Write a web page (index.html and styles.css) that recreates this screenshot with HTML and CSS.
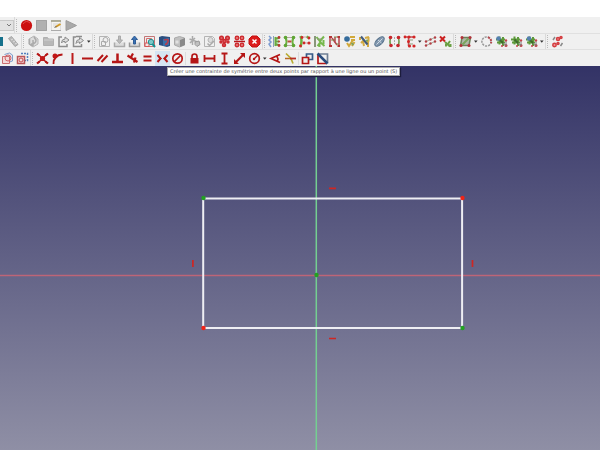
FILE: index.html
```html
<!DOCTYPE html>
<html lang="fr">
<head>
<meta charset="utf-8">
<title>Sketcher</title>
<link rel="stylesheet" href="styles.css">
</head>
<body>
<svg class="defs" aria-hidden="true">
  <symbol id="caret" viewBox="0 0 6 15"><path d="M1 6.500h3.600l-1.800 2.300z" fill="#333"/></symbol>
  <symbol id="flower" viewBox="0 0 15 15">
    <g fill="none" stroke="#5d9a3a" stroke-width="2"><path d="M5.500 2.500v8M9 3v9M2 5.500h9M3 8.500h8"/></g>
    <path d="M5.500 5.500L9 9" stroke="#3d6a2a" stroke-width="2"/>
    <g fill="#c4434a"><circle cx="12" cy="6.500" r="1.200"/><circle cx="12" cy="11.500" r="1.500"/><circle cx="8" cy="12" r="1"/></g>
    <path d="M9 9l3 2.500 0-4" fill="none" stroke="#7a7a7a"/>
  </symbol>
  <symbol id="sheet" viewBox="0 0 15 15"><path d="M2.500 2.500h8l2 2v8h-10z" fill="#f0f0f0" stroke="#b4b4b4"/></symbol>
</svg>

<header class="toolbars">
  <div class="toolbar" role="toolbar" aria-label="Macro">
    <div class="group">
      <div class="combo">
        <select aria-label="Atelier"><option></option></select>
        <svg class="chevron" viewBox="0 0 8 8"><path d="M2 3l2 2 2-2" fill="none" stroke="#777"/></svg>
      </div>
    </div>
    <div class="group last">
      <button aria-label="Enregistrer"><svg viewBox="0 0 15 15"><circle cx="7.500" cy="7.500" r="5.600" fill="#cc1010"/><path d="M4 6q3-4.500 7-1" stroke="#e04848" fill="none"/></svg></button>
      <button aria-label="Arrêter"><svg viewBox="0 0 15 15"><path d="M2 2h11v11H2z" fill="#b0b0b0"/><path d="M2.500 2.500h10v10h-10z" fill="none" stroke="#a2a2a2"/></svg></button>
      <button aria-label="Macros"><svg viewBox="0 0 15 15"><path d="M2.500 2.500h9v10h-9z" fill="#f4f4ef" stroke="#ddd"/><path d="M2 3h10" stroke="#9a9a80" stroke-width="1.500"/><path d="M4 6h6M4 8h3" stroke="#d4d4d4"/><path d="M6.500 9l5-3" stroke="#d39a22" stroke-width="2"/><path d="M5.500 9.500l2-1" stroke="#666"/><path d="M2 12.500h10" stroke="#aaa"/></svg></button>
      <button aria-label="Exécuter"><svg viewBox="0 0 15 15"><path d="M2 2.500l10.500 5L2 12.500z" fill="#a9a9a9" stroke="#9c9c9c"/></svg></button>
    </div>
  </div>

  <div class="toolbar middle" role="toolbar" aria-label="Esquisse">
    <div class="group">
      <button class="cut" aria-label="Partie"><svg viewBox="0 0 15 15"><path d="M2 3h8v9H2z" fill="#16718c"/><path d="M4 5h3v3H4z" fill="#4fc0d2"/></svg></button>
      <button aria-label="Mesurer"><svg viewBox="0 0 15 15"><path d="M2.500 4.500l3-2 6.500 8-3 2z" fill="#b9b9b9" stroke="#a4a4a4"/><path d="M5 6l2-1M7 8l2-1M9 10l2-1" stroke="#ddd"/></svg></button>
    </div>
    <div class="group">
      <button aria-label="Corps"><svg viewBox="0 0 15 15"><path d="M3 5l5-3 4 3v5l-5 3-4-3z" fill="#ddd" stroke="#b4b4b4"/><path d="M3.500 5v5l3 2M7 6v6M5 10q5 0 5-4L8 3" stroke="#aaa" fill="none" stroke-width="1.500"/></svg></button>
      <button aria-label="Groupe"><svg viewBox="0 0 15 15"><path d="M2.500 3.500h4l1 1.500h5v6.500h-10z" fill="#b8b8b8" stroke="#b0b0b0"/><path d="M3 6h9" stroke="#d0d0d0"/></svg></button>
      <button aria-label="Lien"><svg viewBox="0 0 15 15"><path d="M6 3H3v9.500h8V10" fill="none" stroke="#8c8c8c" stroke-width="1.500"/><path d="M5.500 9q0-4 3.500-4V3l4 3-4 3V7.500Q6.500 7 5.500 9z" fill="#ddd" stroke="#8c8c8c"/></svg></button>
      <button aria-label="Actions de lien"><svg viewBox="0 0 15 15"><path d="M5 3H2.500v9.500h8V10M5 2.500h6" fill="none" stroke="#8c8c8c" stroke-width="1.500"/><path d="M5 9.500q0-4 3.500-4v-2l4 3-4 3V8Q6 7.500 5 9.500z" fill="#ddd" stroke="#8c8c8c"/></svg></button>
      <button class="drop" aria-label="Plus de liens"><svg><use href="#caret"/></svg></button>
    </div>
    <div class="group">
      <button aria-label="Nouvelle esquisse"><svg viewBox="0 0 15 15"><use href="#sheet"/><circle cx="8.500" cy="6" r="2.500" fill="none" stroke="#aaa"/><path d="M4.500 7.500h4v4h-4z" fill="none" stroke="#aaa"/></svg></button>
      <button aria-label="Modifier l'esquisse"><svg viewBox="0 0 15 15"><path d="M2.500 8.500v4h10v-4" fill="#ddd" stroke="#aaa" stroke-width="1.500"/><path d="M6.500 2h2v4h2l-3 3.500-3-3.500h2z" fill="#bbb" stroke="#aaa"/></svg></button>
      <button aria-label="Quitter l'esquisse"><svg viewBox="0 0 15 15"><path d="M2.500 8.500v4h10v-4" fill="#ddd" stroke="#999" stroke-width="1.500"/><path d="M7.500 2l3 3.500h-2V10h-2V5.500h-2z" fill="#3972b4" stroke="#2f5c96"/></svg></button>
      <button aria-label="Vue de l'esquisse"><svg viewBox="0 0 15 15"><path d="M2.500 2.500h10v10h-10z" fill="#eee" stroke="#c27676"/><path d="M4.500 4.500h5v5h-5z" fill="none" stroke="#d76c6c"/><path d="M3 9h4v3.500H3z" fill="#f4e4e4" stroke="#d45a5a"/><circle cx="9" cy="8" r="2.700" fill="#7cc8c8" stroke="#219191"/><path d="M10.500 10l2.500 3" stroke="#159090" stroke-width="2"/></svg></button>
      <button aria-label="Vue de section"><svg viewBox="0 0 15 15"><path d="M2 3l3-1 8 1v9l-3 1-8-2z" fill="#2c4f80"/><path d="M6 5l6-1v7l-6 1z" fill="#3971aa"/><path d="M7 6q5-1.500 4 1.500t-3 3" fill="none" stroke="#b63e4c" stroke-width="1.700"/></svg></button>
      <button aria-label="Projeter sur face"><svg viewBox="0 0 15 15"><path d="M2.500 4l5-1.500 5 1.500v7l-5 2-5-2z" fill="#c0c0c0" stroke="#aaa"/><path d="M8 6v7l5-2V4z" fill="#8a8a8a"/><path d="M3.500 6.500h3v3h-3z" fill="#e0e0e0"/></svg></button>
      <button aria-label="Réorienter"><svg viewBox="0 0 15 15"><path d="M5.500 2v9M2.500 5l8 3M3 9l5-5" stroke="#aaa" stroke-width="1.500"/><path d="M8 8l4-1 1 3.500-3 2-2-2z" fill="#c0c0c0" stroke="#999"/></svg></button>
      <button aria-label="Valider"><svg viewBox="0 0 15 15"><use href="#sheet"/><circle cx="8.500" cy="6" r="2.500" fill="#ddd" stroke="#b4b4b4"/><path d="M5.500 9.500l2 2 4.500-4.500" fill="none" stroke="#aaa" stroke-width="1.500"/></svg></button>
      <button aria-label="Fusionner"><svg viewBox="0 0 15 15"><g fill="#df6468" stroke="#cc2a30" stroke-width="1.500"><circle cx="4.500" cy="4" r="1.800"/><circle cx="10.500" cy="4" r="1.800"/><circle cx="7.500" cy="7" r="1.600"/><circle cx="11" cy="8" r="1"/><circle cx="4" cy="8" r="1"/><circle cx="7" cy="11" r="1.500"/></g></svg></button>
      <button aria-label="Miroir"><svg viewBox="0 0 15 15"><g fill="#e88" stroke="#ce2c30" stroke-width="1.500"><circle cx="5" cy="4" r="1.700"/><circle cx="10" cy="4" r="1.700"/><circle cx="5" cy="11" r="1.700"/><circle cx="10" cy="11" r="1.700"/></g><path d="M2 7.500h11" stroke="#b7161c" stroke-width="1.500"/></svg></button>
      <button aria-label="Arrêter l'opération"><svg viewBox="0 0 15 15"><path d="M5 2h5l3 3v5l-3 3H5l-3-3V5z" fill="#dc1c1c" stroke="#c41313"/><path d="M5.500 5.500l4 4m0-4l-4 4" stroke="#fff" stroke-width="1.500"/></svg></button>
    </div>
    <div class="group">
      <button aria-label="Degrés de liberté"><svg viewBox="0 0 15 15"><path d="M2 2l2 2-2 2 2 2-2 2 2 3" fill="none" stroke="#7c9bd0" stroke-width="1.500"/><path d="M6.500 2v11" stroke="#8aa0b8"/><path d="M8 3.500q2 2 4 0M8 7.500h4M8 11.500q2-2 4 0M8.500 3v9" fill="none" stroke="#68ab40" stroke-width="2"/><g fill="#b83a32"><circle cx="12" cy="3.500" r="1.400"/><circle cx="12" cy="7.500" r="1"/><circle cx="12" cy="11.500" r="1.400"/></g></svg></button>
      <button aria-label="Contraintes associées"><svg viewBox="0 0 15 15"><path d="M3.500 3q2 4.500 0 9M11.500 3q-2 4.500 0 9" fill="none" stroke="#6bb340" stroke-width="2"/><path d="M5 3.500h5M5 11.500h5" stroke="#b8a8a0"/><path d="M5.500 7.500h4" stroke="#b8503c" stroke-width="2"/><g fill="#5fa535"><circle cx="3.500" cy="3.500" r="1.800"/><circle cx="11.500" cy="3.500" r="1.800"/><circle cx="3.500" cy="11.500" r="1.800"/><circle cx="11.500" cy="11.500" r="1.800"/></g></svg></button>
      <button aria-label="Éléments associés"><svg viewBox="0 0 15 15"><path d="M3.500 2q2 5 0 11M9.500 2.500l3 2" fill="none" stroke="#6bb340" stroke-width="2.500"/><path d="M5 3h5M7 9h5" stroke="#c9a4a4"/><g fill="#d02828"><circle cx="5" cy="3.500" r="1.400"/><circle cx="12" cy="4" r="1.400"/><circle cx="7" cy="9" r="1.400"/><circle cx="12" cy="9" r="1.600"/><circle cx="3.500" cy="12" r="1.400"/></g></svg></button>
      <button aria-label="Contraintes redondantes"><svg viewBox="0 0 15 15"><path d="M3 2v11" stroke="#667a55" stroke-width="1.500"/><path d="M4.500 3l4 5-3 4M8 7l4-4.500M8 8l4.500 4M11.500 6v4M7.500 10v3" fill="none" stroke="#76b84c" stroke-width="2"/><path d="M5 5h5" stroke="#8f9a78"/></svg></button>
      <button aria-label="Contraintes conflictuelles"><svg viewBox="0 0 15 15"><path d="M3 2v11M12 2v11M5 4l5 7M8 3v6" fill="none" stroke="#b8414a" stroke-width="1.500"/><path d="M4 6h4M7 3h5M9 10h3" stroke="#7d8c50"/><path d="M2 3h3M10.500 3h2.500M2 12h3M10.500 12h2.500" stroke="#b63434" stroke-width="2"/></svg></button>
      <button aria-label="Géométrie interne"><svg viewBox="0 0 15 15"><path d="M8 3h5M9 6h4M5 9l2 3 4-6M10 12l2.500-4" fill="none" stroke="#d2a93a" stroke-width="2"/><circle cx="5" cy="5" r="2.800" fill="#356c9c"/><path d="M9.500 9l2 2" stroke="#83a35b" stroke-width="2"/></svg></button>
      <button aria-label="Sélectionner l'origine"><svg viewBox="0 0 15 15"><path d="M3 3v3M11.500 3v4l-3 2M4 9l2-2 1 5M11 8v5M8 4l4-1" fill="none" stroke="#d2aa42" stroke-width="2"/><path d="M4 2.500l6.500 8" stroke="#425b7c" stroke-width="2"/><circle cx="10" cy="6.500" r="1" fill="#6ca350"/></svg></button>
      <button aria-label="Afficher la géométrie"><svg viewBox="0 0 15 15"><ellipse cx="7.500" cy="7.500" rx="6" ry="3" transform="rotate(-45 7.500 7.500)" fill="#8096ad" stroke="#54708a"/><path d="M4.500 10.500l6-6M6 6l3.500 3" stroke="#cfdae4"/></svg></button>
      <button aria-label="Symétrie"><svg viewBox="0 0 15 15"><path d="M4 2.500q-2 5 0 10M11 2.500q2 5 0 10" fill="none" stroke="#6f9a4a" stroke-width="1.500"/><path d="M7.500 3v9" stroke="#aaa" stroke-dasharray="2 1"/><g fill="#c8262c"><circle cx="3.500" cy="3.500" r="1.800"/><circle cx="4" cy="11.500" r="1.800"/><circle cx="11.500" cy="3.500" r="1.800"/><circle cx="11" cy="11.500" r="1.800"/></g></svg></button>
      <button aria-label="Cloner"><svg viewBox="0 0 15 15"><path d="M2 3h11M6.500 3v9" fill="none" stroke="#c25056" stroke-width="1.500"/><path d="M7 6h4M7 10h4" fill="none" stroke="#8d9c7c"/><g fill="#d32626"><circle cx="3" cy="3" r="1.400"/><circle cx="7" cy="3" r="1.600"/><circle cx="12" cy="3" r="1.600"/><circle cx="6.500" cy="7.500" r="1.500"/><circle cx="7.500" cy="12" r="1.600"/><circle cx="12" cy="12" r="1.600"/></g></svg></button>
      <button class="drop" aria-label="Plus de copies"><svg><use href="#caret"/></svg></button>
      <button aria-label="Réseau rectangulaire"><svg viewBox="0 0 15 15"><path d="M3 7.500l9-4M3 11.500l9-4" stroke="#a9a99c"/><g fill="#b33f45"><circle cx="3" cy="7.500" r="1.200"/><circle cx="7.500" cy="5.500" r="1.200"/><circle cx="12" cy="3.500" r="1.200"/><circle cx="3" cy="11.500" r="1.200"/><circle cx="7.500" cy="9.500" r="1.200"/><circle cx="12" cy="7.500" r="1.200"/></g></svg></button>
      <button aria-label="Supprimer l'alignement"><svg viewBox="0 0 15 15"><path d="M2 2.500l5 5M7 2.500l-5 5" stroke="#cb2020" stroke-width="2"/><path d="M7 8l5 4.500M8 12.500V10M12 7l-2 3M12.500 10v3" stroke="#6aa044" stroke-width="2"/></svg></button>
    </div>
    <div class="group">
      <button aria-label="B-spline"><svg viewBox="0 0 15 15"><path d="M4 3.500h8.500L11 11.500H2.500z" fill="#b0b8a8" stroke="#6d8059" stroke-width="1.500"/><path d="M4.500 10.500l6-6" stroke="#7aa55c" stroke-width="2"/><g fill="#b4303a"><circle cx="4" cy="3.500" r="1.500"/><circle cx="12" cy="3.500" r="1.500"/><circle cx="3" cy="11.500" r="1.500"/><circle cx="11" cy="11.500" r="1.500"/></g></svg></button>
      <button class="drop" aria-label="Plus de B-splines"><svg><use href="#caret"/></svg></button>
      <button aria-label="Convertir en NURBS"><svg viewBox="0 0 15 15"><circle cx="7.500" cy="7.500" r="4.600" fill="none" stroke="#999" stroke-width="1.500" stroke-dasharray="2.200 1"/><path d="M9 3.200q4 2 3 6" fill="none" stroke="#b8484e" stroke-width="2" stroke-dasharray="2 1"/></svg></button>
      <button aria-label="Augmenter le degré"><svg viewBox="0 0 15 15"><use href="#flower"/><circle cx="4.500" cy="4.500" r="2.300" fill="#5580b0"/></svg></button>
      <button aria-label="Diminuer le degré"><svg viewBox="0 0 15 15"><use href="#flower"/></svg></button>
      <button aria-label="Multiplicité"><svg viewBox="0 0 15 15"><use href="#flower"/><circle cx="5" cy="4.500" r="2.300" fill="#5580b0"/></svg></button>
      <button class="drop" aria-label="Plus de multiplicités"><svg><use href="#caret"/></svg></button>
    </div>
    <div class="group last">
      <button aria-label="Espace virtuel"><svg viewBox="0 0 15 15"><g fill="#e99" stroke="#d43c40" stroke-width="1.500"><circle cx="8" cy="5" r="1.500"/><circle cx="11" cy="3.500" r="1"/><circle cx="4.500" cy="11" r="1.700"/><circle cx="8" cy="9.500" r="1"/></g><path d="M3 6l2-3M10.500 12l2-3" stroke="#888" stroke-width="1.500"/></svg></button>
    </div>
  </div>

  <div class="toolbar" role="toolbar" aria-label="Contraintes">
    <div class="group">
      <button aria-label="Copie carbone"><svg viewBox="0 0 15 15"><path d="M4.500 3.500l5-1.500 3 2v6l-3 1" fill="#e3e8f1" stroke="#7f9dca"/><path d="M2.500 5.500h7v7h-7z" fill="#f3dada" stroke="#cc6d70"/><circle cx="8" cy="7" r="3" fill="none" stroke="#d26468"/></svg></button>
      <button aria-label="Mode construction"><svg viewBox="0 0 15 15"><path d="M6 2.500h6.500v7H10" fill="none" stroke="#5580bd" stroke-width="1.500" stroke-dasharray="2 1"/><path d="M2.500 5.500h7v7h-7z" fill="#f3dada" stroke="#bc5557" stroke-width="1.500"/><circle cx="6" cy="9" r="2" fill="none" stroke="#c6484c"/></svg></button>
    </div>
    <div class="group last">
      <button aria-label="Coïncidence"><svg viewBox="0 0 15 15"><path d="M3 3l9 9M12 3l-9 9" stroke="#b51616" stroke-width="1.500"/><path d="M2 2.500l2.500 2M13 2.500l-2.500 2M2 12.500l2.500-2M13 12.500l-2.500-2" stroke="#b51616" stroke-width="2.200"/><circle cx="7.500" cy="7.500" r="2.600" fill="#c11818"/></svg></button>
      <button aria-label="Point sur objet"><svg viewBox="0 0 15 15"><path d="M3.500 13q0-9 9-9.500" fill="none" stroke="#b51616" stroke-width="1.800"/><circle cx="5" cy="5" r="2.500" fill="#c11818"/></svg></button>
      <button aria-label="Vertical"><svg viewBox="0 0 15 15"><path d="M7.500 2v11" stroke="#bd1c1c" stroke-width="2"/></svg></button>
      <button aria-label="Horizontal"><svg viewBox="0 0 15 15"><path d="M2 7.500h11" stroke="#b51616" stroke-width="2"/></svg></button>
      <button aria-label="Parallèle"><svg viewBox="0 0 15 15"><path d="M2.500 10l5.500-6M6.500 11l6-6.500" stroke="#b51616" stroke-width="2"/></svg></button>
      <button aria-label="Perpendiculaire"><svg viewBox="0 0 15 15"><path d="M7.500 2.500V11M2 11h11" stroke="#b51616" stroke-width="2.500"/></svg></button>
      <button aria-label="Tangente"><svg viewBox="0 0 15 15"><path d="M2.500 4.500l10 6.500M8 2.500L5.500 7M10.500 6.500l-1.500 5" stroke="#b51616" stroke-width="2.200"/></svg></button>
      <button aria-label="Égalité"><svg viewBox="0 0 15 15"><path d="M3.500 5.500h8M3.500 9.500h8" stroke="#b51616" stroke-width="2"/></svg></button>
      <div class="tip-anchor">
        <button class="hover" aria-label="Symétrie" aria-describedby="tip"><svg viewBox="0 0 15 15"><path d="M2.500 4l3 3.500-3 3.500M12.500 4l-3 3.500 3 3.500" fill="none" stroke="#b51616" stroke-width="2"/><path d="M4 5.500l3 2-3 2zM11 5.500l-3 2 3 2z" fill="#b51616"/></svg></button>
        <div class="tooltip" role="tooltip" id="tip">Créer une contrainte de symétrie entre deux points par rapport à une ligne ou un point (S)</div>
      </div>
      <button aria-label="Bloquer"><svg viewBox="0 0 15 15"><circle cx="7.500" cy="7.500" r="4.700" fill="none" stroke="#b51616" stroke-width="1.700"/><path d="M4.500 10.500l6-6" stroke="#b51616" stroke-width="1.700"/></svg></button>
      <span class="rule"></span>
      <button aria-label="Verrouiller"><svg viewBox="0 0 15 15"><path d="M3.500 7h8v5.500h-8z" fill="#b51616"/><path d="M5 7.500V5.500q0-2.500 2.500-2.500T10 5.500v2" fill="none" stroke="#b51616" stroke-width="1.700"/></svg></button>
      <button aria-label="Distance horizontale"><svg viewBox="0 0 15 15"><path d="M2.500 4v7M12.500 4v7M3 7.500h9" stroke="#b51616" stroke-width="1.800"/></svg></button>
      <button aria-label="Distance verticale"><svg viewBox="0 0 15 15"><path d="M4.500 2.500h6M4.500 12.500h6M7.500 3v9" stroke="#b51616" stroke-width="1.800"/></svg></button>
      <button aria-label="Distance"><svg viewBox="0 0 15 15"><path d="M4 11l7-7" stroke="#b51616" stroke-width="2.200"/><path d="M13 2v5L8 2zM2 13V8l5 5z" fill="#b51616"/></svg></button>
      <button aria-label="Rayon"><svg viewBox="0 0 15 15"><circle cx="7.500" cy="7.500" r="4.800" fill="none" stroke="#b51616" stroke-width="1.700"/><path d="M7 8l4-4" stroke="#b51616" stroke-width="1.500"/><circle cx="7" cy="8" r="1.200" fill="#b51616"/></svg></button>
      <button class="drop" aria-label="Plus de rayons"><svg><use href="#caret"/></svg></button>
      <button aria-label="Angle"><svg viewBox="0 0 15 15"><path d="M12 3.500L3 7.500l9 4M9 5.500q1.500 2 .5 4.500" fill="none" stroke="#b51616" stroke-width="1.700"/></svg></button>
      <button aria-label="Réfraction"><svg viewBox="0 0 15 15"><path d="M2 7.500h6" stroke="#b96a25" stroke-width="1.500"/><path d="M3 2.500l5 5 2 5" fill="none" stroke="#b9ac32" stroke-width="1.700"/><path d="M7 7.500h6" stroke="#b92d25" stroke-width="1.800"/></svg></button>
      <span class="rule"></span>
      <button aria-label="Contrainte pilotante"><svg viewBox="0 0 15 15"><path d="M6.500 3h6v5.500h-6z" fill="#eee" stroke="#365a88" stroke-width="1.700"/><path d="M2.500 6.500h6v6h-6z" fill="#eee" stroke="#b51616" stroke-width="1.700"/></svg></button>
      <button aria-label="Activer la contrainte"><svg viewBox="0 0 15 15"><path d="M4 3h8.500v9.500" fill="none" stroke="#6f7f94" stroke-width="1.700"/><path d="M3 4v8.500h9" fill="none" stroke="#b51616" stroke-width="1.700"/><path d="M2.500 2.500l10 10" stroke="#294b7c" stroke-width="2.500"/></svg></button>
    </div>
  </div>
</header>

<main class="view">
  <svg class="sketch" viewBox="0 0 600 384" preserveAspectRatio="xMidYMin slice" role="img" aria-label="Rectangle">
    <path d="M0 209.500h600" stroke="#bd6577" stroke-width="1.400"/>
    <path d="M316.300 0v384" stroke="#74cf91" stroke-width="1.500"/>
    <path d="M203.200 132.500h258.900v129.600h-258.900z" fill="none" stroke="#eeeef3" stroke-width="2"/>
    <g stroke="#cf2622" stroke-width="1.700"><path d="M329 122.400h7M329 272.500h7M192.900 194v7M472.500 194v7"/></g>
    <g fill="#22a122"><circle cx="203.500" cy="132" r="2.200"/><circle cx="462.500" cy="262" r="2.200"/><circle cx="316.500" cy="209" r="2.200"/></g>
    <g fill="#ef2418"><circle cx="462.500" cy="132" r="2.200"/><circle cx="203.500" cy="262" r="2.200"/></g>
  </svg>
</main>
</body>
</html>
```

FILE: styles.css
```css
*,
*::before {
  box-sizing: border-box;
}

body {
  margin: 0;
  min-height: 100vh;
  display: flex;
  flex-direction: column;
  background: #fff;
  font-family: "DejaVu Sans", "Noto Sans", sans-serif;
}

.defs {
  position: absolute;
  width: 0;
  height: 0;
}

.toolbars {
  padding-top: 17px;
}

.toolbar {
  display: flex;
  height: 16px;
  background: #f0f0f0;
}

.toolbar.middle {
  height: 17px;
  border-top: 1px solid #e0e0e0;
  border-bottom: 1px solid #e0e0e0;
}

.group {
  display: flex;
  align-items: center;
  border-right: 1px solid #dadada;
}

.group.last { border-right: 0; }

.group + .group::before {
  content: "";
  width: 2px;
  height: 13px;
  margin: 0 1px;
  border-left: 1px dotted #bbb;
}

button {
  display: block;
  flex: none;
  width: 15px;
  height: 15px;
  margin: 0;
  padding: 0;
  border: 0;
  background: none;
}

button svg {
  display: block;
  width: 15px;
  height: 15px;
}

button.drop,
button.drop svg {
  width: 6px;
}

button.cut {
  width: 6px;
  overflow: hidden;
}

button.cut svg {
  margin-left: -7px;
}

button.hover { background: #d5e5f3; }

.rule {
  width: 2px;
  height: 13px;
  border-left: 1px solid #ddd;
}

.combo {
  display: grid;
  align-items: center;
  justify-items: end;
  width: 14px;
}

.combo select,
.combo .chevron {
  grid-area: 1 / 1;
}

.combo select {
  appearance: none;
  width: 14px;
  height: 11px;
  padding: 0;
  border: 1px solid #c8c8c8;
  border-left: 0;
  border-radius: 0;
  background: #e2e2e2;
}

.combo .chevron {
  width: 8px;
  height: 8px;
  margin-right: 1px;
  pointer-events: none;
}

.tip-anchor { position: relative; }

.tooltip {
  position: absolute;
  z-index: 1;
  top: 16px;
  left: 12px;
  padding: 0 2px;
  border: 1px solid #aaa;
  background: #fff;
  box-shadow: 1px 1px 1px #1c1c3c;
  color: #555;
  font-size: 5px;
  line-height: 7px;
  white-space: nowrap;
}

.view {
  display: flex;
  flex: 1;
  min-height: 0;
  background: linear-gradient(#333366, #8f8fa5);
}

.sketch {
  flex: 1;
  width: 100%;
  height: calc(100vh - 66px);
}
```
